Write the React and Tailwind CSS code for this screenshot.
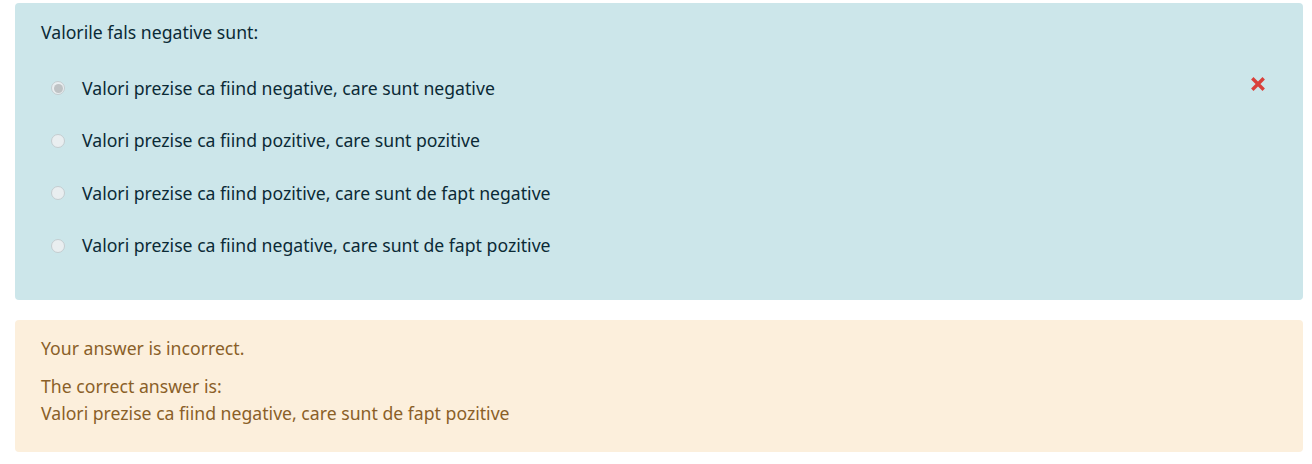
const options = [
  { id: "a", text: "Valori prezise ca fiind negative, care sunt negative", checked: true },
  { id: "b", text: "Valori prezise ca fiind pozitive, care sunt pozitive" },
  { id: "c", text: "Valori prezise ca fiind pozitive, care sunt de fapt negative" },
  { id: "d", text: "Valori prezise ca fiind negative, care sunt de fapt pozitive" },
];

function Radio({ checked }) {
  return (
    <span className="flex h-[14px] w-[14px] items-center justify-center rounded-full border border-[#c4cdd0] bg-[#e9eef0]">
      {checked && <span className="h-[9px] w-[9px] rounded-full bg-[#bfc3c5]" />}
    </span>
  );
}

export default function App() {
  return (
    <div className="min-h-[464px] w-full bg-white pl-[15px] pr-[9px] pt-[3px] text-[17.65px] font-['Noto_Sans',sans-serif]">
      <div className="rounded-[4px] bg-[#cce6ea] px-[26px] pt-[18px] pb-[28px] text-[#0b2a36]">
        <p className="leading-[23px]">Valorile fals negative sunt:</p>
        <div className="mt-[18px]">
          {options.map((o) => (
            <div key={o.id} className="flex h-[52.5px] items-center">
              <span className="ml-[10px] mr-[17px]">
                <Radio checked={o.checked} />
              </span>
              <span className="flex-1 leading-[23px]">{o.text}</span>
              {o.checked && (
                <svg width="14" height="14" viewBox="0 0 14 14" className="mr-[12px] -translate-y-[4px]">
                  <path d="M2.5 2.5 L11.5 11.5 M11.5 2.5 L2.5 11.5" stroke="#d9403a" strokeWidth="3.4" strokeLinecap="square" />
                </svg>
              )}
            </div>
          ))}
        </div>
      </div>
      <div className="mt-[20px] rounded-[4px] bg-[#fcefdc] px-[26px] pt-[15px] pb-[25px] text-[#8a5f28] leading-[27px]">
        <p>Your answer is incorrect.</p>
        <p className="mt-[11px]">
          The correct answer is:
          <br />
          Valori prezise ca fiind negative, care sunt de fapt pozitive
        </p>
      </div>
    </div>
  );
}
